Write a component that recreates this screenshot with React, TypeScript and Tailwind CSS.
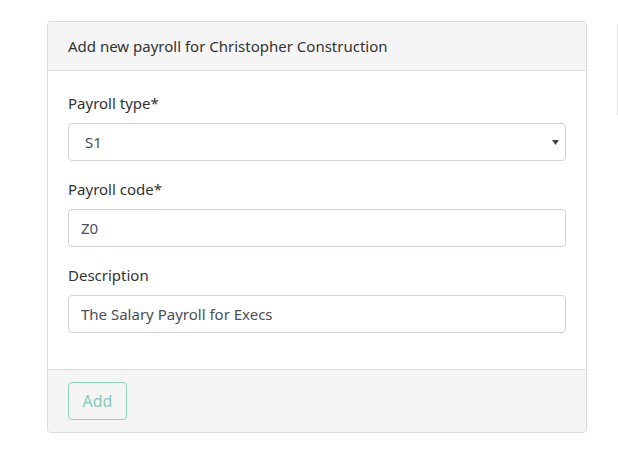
const fieldClass =
  "h-[38px] w-full rounded-[4px] border border-[#ced4da] bg-white px-3 text-[15px] text-[#495057] outline-none";

function Field({ label, children }: { label: string; children: React.ReactNode }) {
  return (
    <div className="mb-4 flex flex-col">
      <label className="mb-2 text-[15px] leading-6 text-[#333]">{label}</label>
      {children}
    </div>
  );
}

export default function App() {
  return (
    <div className="flex min-h-screen bg-white font-['Noto_Sans',sans-serif]">
      <div className="ml-[47px] mt-[21px] flex h-fit w-[540px] flex-col rounded-[4px] border border-[#dcdcdc]">
        <div className="rounded-t-[4px] border-b border-[#dcdcdc] bg-[#f5f5f5] px-5 py-3 text-[15px] leading-6 text-[#333]">
          Add new payroll for Christopher Construction
        </div>
        <div className="px-5 pb-5 pt-5">
          <Field label="Payroll type*">
            <div className={`${fieldClass} flex items-center justify-between`}>
              <span className="pl-[4px]">S1</span>
              <svg width="7" height="5" viewBox="0 0 7 5" className="mr-[-6px]">
                <path d="M0 0H7L3.5 5Z" fill="#444" />
              </svg>
            </div>
          </Field>
          <Field label="Payroll code*">
            <input className={fieldClass} defaultValue="Z0" />
          </Field>
          <Field label="Description">
            <input className={fieldClass} defaultValue="The Salary Payroll for Execs" />
          </Field>
        </div>
        <div className="rounded-b-[4px] border-t border-[#dcdcdc] bg-[#f5f5f5] px-5 py-3">
          <button className="h-[38px] w-[59px] rounded-[4px] border border-[#8dd4bb] text-[16px] text-[#86c9b6]">
            Add
          </button>
        </div>
      </div>
      <div className="ml-[30px] mt-[24px] h-[91px] border-l border-[#e2e2e2]" />
    </div>
  );
}
